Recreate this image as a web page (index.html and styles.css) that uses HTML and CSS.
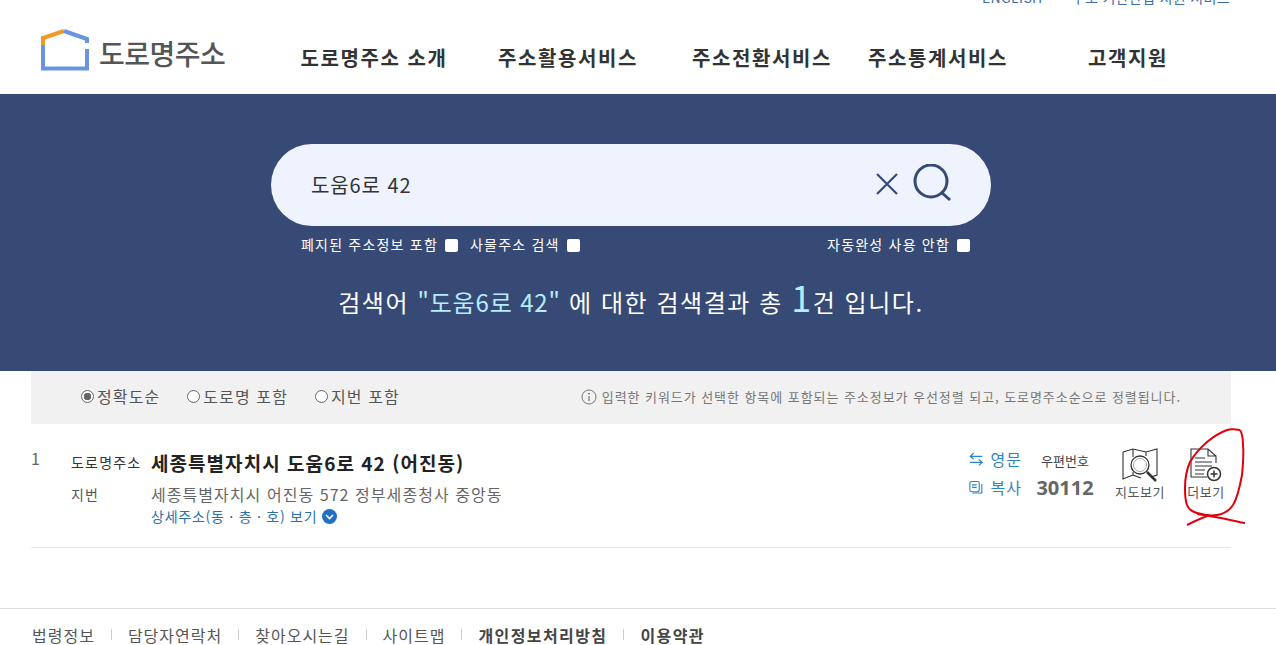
FILE: index.html
```html
<!DOCTYPE html>
<html lang="ko">
<head>
<meta charset="utf-8">
<title>도로명주소</title>
<link rel="stylesheet" href="styles.css">
</head>
<body>
<div class="page">
  <header class="header">
    <div class="toplinks"><a class="en">ENGLISH</a><a class="kids">주소 기반산업 지원 서비스</a></div>
    <div class="headrow">
      <a class="logo">
        <svg class="logo-mark" width="50" height="42" viewBox="0 0 50 42"><path d="M2 16V39.500H46V20" fill="none" stroke="#6a94e0" stroke-width="4"/><path d="M2 16V9L23 2" fill="none" stroke="#f09a2a" stroke-width="4"/><path d="M23 2L46 10V14" fill="none" stroke="#6a94e0" stroke-width="4"/></svg>
        <span class="logo-text">도로명주소</span>
      </a>
      <nav class="nav">
        <a>도로명주소 소개</a><a>주소활용서비스</a><a>주소전환서비스</a><a>주소통계서비스</a><a>고객지원</a>
      </nav>
    </div>
  </header>

  <section class="hero">
    <div class="search">
      <span class="query">도움6로 42</span>
      <svg class="ico-x" width="24" height="24" viewBox="0 0 24 24"><path d="M2 2L22 22M22 2L2 22" stroke="#364a75" stroke-width="2.2" fill="none"/></svg>
      <svg class="ico-search" width="40" height="40" viewBox="0 0 40 40"><circle cx="18" cy="17" r="16" fill="none" stroke="#364a75" stroke-width="3"/><path d="M28 28L37 36" stroke="#364a75" stroke-width="3" fill="none"/></svg>
    </div>
    <div class="opts">
      <div class="opts-left">
        <label class="opt">폐지된 주소정보 포함 <input class="chk" type="checkbox"></label>
        <label class="opt">사물주소 검색 <input class="chk" type="checkbox"></label>
      </div>
      <label class="opt">자동완성 사용 안함 <input class="chk" type="checkbox"></label>
    </div>
    <p class="result">검색어 <span class="hl">"도움6로 42"</span> 에 대한 검색결과 총 <span class="count">1</span>건 입니다.</p>
  </section>

  <main class="content">
    <div class="filter">
      <div class="radios">
        <label class="radio"><input class="rad" type="radio" name="o" checked>정확도순</label>
        <label class="radio"><input class="rad" type="radio" name="o">도로명 포함</label>
        <label class="radio"><input class="rad" type="radio" name="o">지번 포함</label>
      </div>
      <p class="note"><svg class="ico-info" width="16" height="16" viewBox="0 0 16 16"><circle cx="8" cy="8" r="7" fill="none" stroke="#777" stroke-width="1"/><path d="M8 7V12M7 4.500H8.200V5.500" fill="none" stroke="#777" stroke-width="1.200"/></svg>입력한 키워드가 선택한 항목에 포함되는 주소정보가 우선정렬 되고, 도로명주소순으로 정렬됩니다.</p>
    </div>

    <article class="row">
      <span class="num">1</span>
      <div class="addr">
        <div class="line-road"><span class="tag">도로명주소</span><strong class="road">세종특별자치시 도움6로 42 (어진동)</strong></div>
        <div class="line-jibun"><span class="tag tag-j">지번</span><span class="jibun">세종특별자치시 어진동 572 정부세종청사 중앙동</span></div>
        <a class="detail">상세주소(동 · 층 · 호) 보기 <svg class="ico-down" width="15" height="15" viewBox="0 0 15 15"><circle cx="7.500" cy="7.500" r="7.500" fill="#1f6fc4"/><path d="M4 6L7.500 9.500L11 6" fill="none" stroke="#fff" stroke-width="1.600"/></svg></a>
      </div>
      <div class="actions">
        <div class="links">
          <a class="act"><svg width="17" height="16" viewBox="0 0 17 16"><path d="M15.500 5H2M5.500 1L1.500 5L5.500 8" fill="none" stroke="#2b86c5" stroke-width="1.400"/><path d="M1 12H15M11.500 8.500L15.500 12L11.500 15.500" fill="none" stroke="#2b86c5" stroke-width="1.400"/></svg>영문</a>
          <a class="act"><svg width="17" height="16" viewBox="0 0 17 16"><rect x="1" y="1.500" width="11" height="12" rx="2" fill="none" stroke="#2b86c5" stroke-width="1.300"/><path d="M4 15H15V4.500M3.500 5.500H9M3.500 8.500H9" fill="none" stroke="#2b86c5" stroke-width="1.300"/></svg>복사</a>
        </div>
        <div class="zip"><span class="zip-label">우편번호</span><span class="zip-no">30112</span></div>
        <a class="tool tool-map">
          <svg width="36" height="34" viewBox="0 0 36 34"><path d="M1 4L11 1L24 4L35 1V27L29 29M11 27L1 31V4M11 1V9M24 4V8M11 24V27L19 30" fill="none" stroke="#333" stroke-width="1.100"/><circle cx="18" cy="17" r="9" fill="none" stroke="#333" stroke-width="1.300"/><circle cx="18" cy="17" r="6.500" fill="none" stroke="#aaa" stroke-width="1"/><path d="M25 24L34 33" stroke="#333" stroke-width="2.500" fill="none"/></svg>
          <span>지도보기</span>
        </a>
        <a class="tool tool-more">
          <svg width="32" height="34" viewBox="0 0 32 34"><path d="M17 29H1V1H18L26 8V15M18 1V8H26M5 10H15M5 14H22M5 18H22M5 22H15M5 26H14" fill="none" stroke="#333" stroke-width="1.100"/><circle cx="24" cy="26" r="6.500" fill="#fff" stroke="#333" stroke-width="1.500"/><path d="M20.500 26H27.500M24 22.500V29.500" stroke="#333" stroke-width="1.500" fill="none"/></svg>
          <span>더보기</span>
        </a>
      </div>
    </article>
  </main>

  <footer class="footer">
    <a>법령정보</a><a>담당자연락처</a><a>찾아오시는길</a><a>사이트맵</a><a class="b">개인정보처리방침</a><a class="b">이용약관</a>
  </footer>

  <svg class="scribble" width="1276" height="645" viewBox="0 0 1276 645"><path d="M1240 430C1234 429 1230 429 1227 430C1219 433 1213 437 1207 442C1199 449 1194 455 1190 462C1186 471 1185 479 1185 488C1185 495 1185 500 1187 505C1189 510 1193 512 1197 513C1204 515 1211 516 1217 515C1224 514 1229 511 1233 505C1238 497 1240 486 1242 475C1243 465 1244 455 1243 445C1243 438 1242 433 1240 430M1187 525C1193 522 1201 518 1210 515M1197 514C1213 516 1230 520 1245 523" fill="none" stroke="#e2000f" stroke-width="2"/></svg>
</div>
</body>
</html>
```
FILE: styles.css
```css
* { box-sizing: border-box; }
html, body { margin: 0; padding: 0; height: 100%; overflow: hidden; background: #fff; }
body, input { font-family: "Noto Sans CJK KR", "Noto Sans", sans-serif; }
p { margin: 0; }
a { color: inherit; text-decoration: none; }
.page { position: relative; width: 1276px; height: 645px; overflow: hidden; }

.header { height: 94px; overflow: hidden; }
.toplinks { height: 20px; margin-top: -13px; padding-right: 46px; display: flex; justify-content: flex-end; gap: 29px; font-size: 14px; line-height: 20px; color: #3d6ea8; letter-spacing: 0.35px; }
.headrow { display: flex; height: 87px; padding-left: 41px; }
.logo { display: flex; align-items: flex-start; gap: 8px; width: 236px; padding-top: 22px; }
.logo-mark { flex: none; }
.logo-text { font-size: 28px; line-height: 36px; font-weight: 500; color: #555; letter-spacing: -0.5px; margin-top: 6px; }
.nav { display: grid; grid-template-columns: 194px 194px 194px 158px 222px; padding-top: 36px; text-align: center; font-size: 20px; line-height: 30px; font-weight: 700; color: #333; letter-spacing: 1.6px; }

.hero { height: 277px; background: #364a75; padding: 50px 14px 0 0; display: flex; flex-direction: column; align-items: center; }
.search { width: 720px; height: 82px; border-radius: 41px; background: #eef3fd; display: flex; align-items: center; padding: 0 38px 0 40px; }
.query { flex: 1; font-size: 20px; color: #333; letter-spacing: 0.9px; margin-top: -2px; }
.ico-x { margin-right: 14px; margin-top: -2px; }
.ico-search { margin-top: -2px; }
.opts { width: 669px; margin: 7px 0 0 9px; display: flex; justify-content: space-between; color: #fff; font-size: 14px; line-height: 22px; letter-spacing: 1.2px; }
.opts-left { display: flex; gap: 12px; }
.opt { display: flex; align-items: center; gap: 7px; }
.chk { appearance: none; width: 13px; height: 13px; margin: 2px 0 0; background: #fff; border-radius: 2px; }
.result { margin-top: 23px; font-size: 24px; line-height: 44px; color: #fff; letter-spacing: 1.55px; }
.hl { color: #b5ecff; letter-spacing: 0.85px; }
.count { font-size: 36px; color: #b5ecff; line-height: 36px; }

.content { width: 1200px; margin-left: 31px; }
.filter { height: 53px; background: #f1f1f1; display: flex; justify-content: space-between; align-items: center; padding: 0 50px 0 50px; }
.radios { display: flex; gap: 27px; margin-top: -4px; }
.radio { display: flex; align-items: center; font-size: 16px; color: #555; letter-spacing: 1.1px; line-height: 22px; }
.rad { appearance: none; width: 13px; height: 13px; margin: 2px 3px 0 0; border: 1px solid #666; border-radius: 50%; background: #fff; }
.rad:checked { background: radial-gradient(circle, #666 0 3.5px, #fff 4px); }
.note { display: flex; align-items: center; gap: 5px; font-size: 13px; color: #777; letter-spacing: 0.94px; margin-top: -2px; }
.ico-info { flex: none; }

.row { height: 124px; border-bottom: 1px solid #e6e6e6; position: relative; display: flex; }
.num { width: 40px; padding-top: 24px; font-size: 16px; line-height: 20px; color: #666; }
.addr { flex: 1; padding-top: 24px; }
.line-road, .line-jibun { display: flex; align-items: center; }
.line-road { height: 28px; }
.line-jibun { height: 26px; margin-top: 5px; }
.tag { width: 80px; font-size: 14px; color: #333; letter-spacing: 1.2px; flex: none; }
.tag-j { color: #555; }
.road { font-size: 19px; font-weight: 700; color: #222; letter-spacing: 1.05px; }
.jibun { font-size: 16px; color: #666; letter-spacing: 1.05px; }
.detail { display: flex; align-items: center; gap: 5px; margin-left: 80px; margin-top: -1px; font-size: 14px; line-height: 20px; color: #2a70ad; letter-spacing: 0.75px; }
.ico-down { flex: none; }
.actions { display: flex; align-items: flex-start; padding-top: 22px; }
.links { display: flex; flex-direction: column; gap: 6px; color: #2b86c5; font-size: 16px; letter-spacing: 1px; margin-top: 2px; width: 53px; flex: none; }
.act { display: flex; align-items: center; gap: 7px; line-height: 22px; white-space: nowrap; }
.zip { display: flex; flex-direction: column; align-items: center; margin-left: 12px; width: 62px; margin-top: 2px; }
.zip-label { font-size: 13px; line-height: 26px; color: #444; }
.zip-no { font-size: 20px; line-height: 28px; font-weight: 700; color: #666; font-family: "Noto Sans", sans-serif; }
.tool { display: flex; flex-direction: column; align-items: center; font-size: 13px; line-height: 18px; color: #555; width: 60px; letter-spacing: 0.6px; }
.tool-map { margin-left: 14px; margin-top: 2px; }
.tool span { margin-top: 1px; }
.tool-more { margin-left: 11px; width: 50px; padding-top: 2px; }

.footer { position: relative; margin-top: 60px; border-top: 1px solid #ddd; padding: 15px 0 0 32px; display: flex; font-size: 16px; line-height: 20px; height: 37px; color: #555; letter-spacing: 1px; }
.footer a { display: flex; align-items: center; }
.footer a + a::before { content: ""; width: 1px; height: 11px; background: #ccc; margin: 0 16px; }
.footer .b { font-weight: 700; color: #444; letter-spacing: 1.4px; }

.scribble { position: absolute; left: 0; top: 0; pointer-events: none; }
```
